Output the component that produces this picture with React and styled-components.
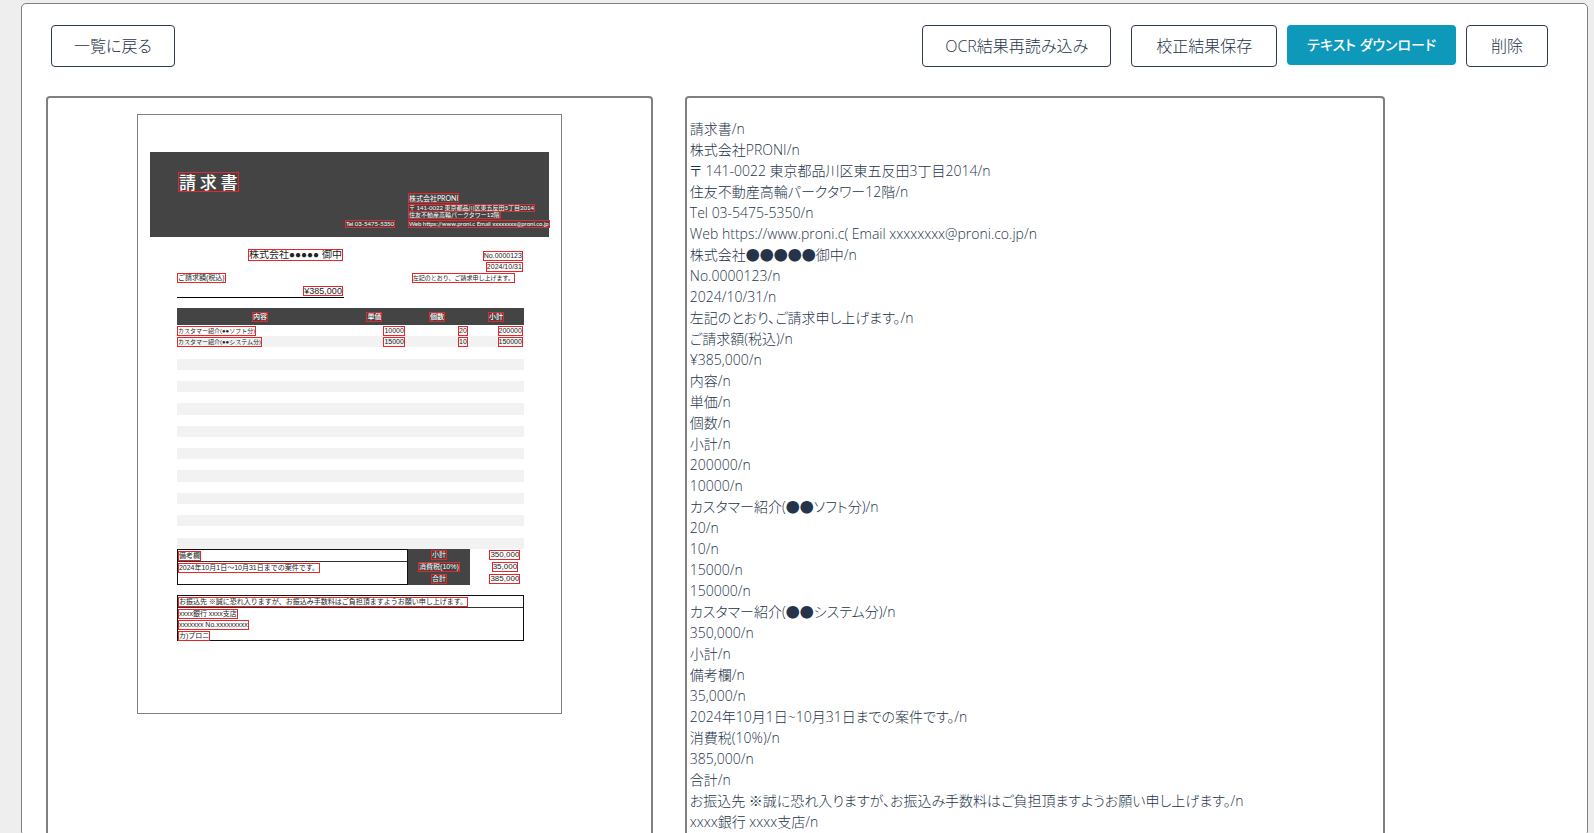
import React from "react";
import styled, { createGlobalStyle } from "styled-components";

const GlobalStyle = createGlobalStyle`
  *, *::before, *::after { box-sizing: border-box; }
  body {
    margin: 0;
    background: #eeeeee;
    color: #26344a;
    font: 14px/21px "Open Sans", "Noto Sans CJK JP", sans-serif;
    font-feature-settings: "palt";
  }
`;

const Page = styled.div`
  height: 100vh;
  overflow: hidden;
  padding: 3px 6px 0 21px;
`;

const Card = styled.main`
  display: flex;
  flex-direction: column;
  min-height: 100vh;
  background: #ffffff;
  border: 1px solid #808080;
  border-radius: 5px;
`;

const Toolbar = styled.header`
  display: flex;
  align-items: flex-start;
  justify-content: space-between;
  padding: 21px 39px 29px 29px;
`;

const Actions = styled.div`
  display: flex;
  align-items: flex-start;
  gap: 10px;
`;

const Button = styled.button`
  height: 42px;
  padding: 0 ${(p) => (p.$snug ? 22 : 24)}px;
  border: 1px solid #2c3a52;
  border-radius: 4px;
  background: #ffffff;
  color: #26344a;
  font: 16px/24px "Open Sans", "Noto Sans CJK JP", sans-serif;
  font-weight: 300;
  font-feature-settings: inherit;
  white-space: nowrap;
  cursor: pointer;
`;

const ReloadButton = styled(Button)`
  margin-right: 10px;
`;

const PrimaryButton = styled(Button)`
  height: 40px;
  padding: 0 20px;
  border: 0;
  background: #0e98ba;
  color: #ffffff;
  font-size: 14px;
  font-weight: 500;
`;

const Panels = styled.div`
  flex: 1;
  display: flex;
  gap: 32px;
  padding: 0 24px;
`;

const Panel = styled.section`
  border: 2px solid #808080;
  border-bottom: 0;
  border-radius: 4px 4px 0 0;
`;

const PreviewPanel = styled(Panel)`
  flex: 0 0 40%;
  padding-top: 16px;
`;

const TextPanel = styled(Panel)`
  flex: 0 1 700px;
  padding: 20px 3px 0;
`;

const Line = styled.p`
  margin: 0;
  font-weight: 300;
  white-space: pre-wrap;
`;

const Sheet = styled.article`
  width: 425px;
  height: 600px;
  margin: 0 auto;
  padding: 37px 12px 0;
  border: 1px solid #808080;
  background: #ffffff;
  color: #222222;
  font: 7px/8px "Liberation Sans", "Noto Sans CJK JP", sans-serif;
`;

const Mark = styled.span`
  display: inline-block;
  height: ${(p) => p.$h || 8}px;
  line-height: ${(p) => p.$h || 8}px;
  font-size: ${(p) => p.$size || 7}px;
  outline: 1px solid #e8262a;
  vertical-align: top;
  white-space: nowrap;
`;

const Band = styled.header`
  display: flex;
  flex-direction: column;
  height: 85px;
  padding: 21px 8px 0 29px;
  background: #444444;
  color: #ffffff;
`;

const Title = styled.h1`
  height: 21px;
  margin: 0;
  font-size: 17px;
  font-weight: 500;
  line-height: 18px;
  font-family: "Noto Sans CJK JP", sans-serif;
`;

const Sender = styled.div`
  display: grid;
  grid-template-columns: 63px 132px;
  grid-template-rows: 11px 7px 9px 7px;
  justify-content: end;
  align-items: start;
  font-family: Lato, "Noto Sans CJK JP", sans-serif;

  & > * { grid-column: 2; justify-self: start; }
  & > :last-child { grid-column: 1; grid-row: 4; }
`;

const Body = styled.div`
  padding: 11px 25px 0 27px;
`;

const Summary = styled.div`
  display: flex;
  justify-content: space-between;
  align-items: flex-start;
  height: 60px;
`;

const Billing = styled.div`
  display: flex;
  flex-direction: column;
  align-items: flex-end;
  width: 167px;
  height: 50px;
  padding: 2px 2px 0 1px;
  border-bottom: 1px solid #000000;

  & > :nth-child(2) { align-self: flex-start; margin: 14px 0 5px; }
`;

const Issue = styled.div`
  display: flex;
  flex-direction: column;
  align-items: flex-end;
  gap: 3px;
  padding: 4px 2px 0 0;

  & > :last-child { margin-right: 8px; }
`;

const Items = styled.table`
  width: 100%;
  height: 241px;
  border-collapse: collapse;
  table-layout: fixed;
  line-height: 8px;

  th, td { padding: 0 2px 0 1px; vertical-align: middle; text-align: right; line-height: 8px; }
  td { height: 11px; }
  td:first-child { text-align: left; }
  th { height: 17px; text-align: center; color: #ffffff; background: #444444; font-weight: 500; }
  tbody tr:nth-child(even) { background: #f2f2f2; }
  col:nth-child(1) { width: 167px; }
  col:nth-child(2) { width: 62px; }
  col:nth-child(3) { width: 63px; }
`;

const Totals = styled.div`
  display: grid;
  grid-template-columns: 231px 62px 1fr;
  height: 36px;
`;

const Box = styled.section`
  border: 1px solid #111111;
`;

const BoxHead = styled.div`
  height: 12px;
  padding: 2px 0 0 1px;
  border-bottom: 1px solid #333333;
`;

const BoxBody = styled.div`
  display: flex;
  flex-direction: column;
  align-items: flex-start;
  gap: 3px;
  padding: 2px 0 0 1px;
`;

const SumColumn = styled.div`
  display: flex;
  flex-direction: column;
  align-items: center;
  justify-content: space-around;
  padding-left: ${(p) => (p.$dark ? 0 : 16)}px;
  background: ${(p) => (p.$dark ? "#444444" : "transparent")};
  color: ${(p) => (p.$dark ? "#ffffff" : "inherit")};
`;

const BankBox = styled(Box)`
  height: 46px;
  margin-top: 10px;
`;

const ITEMS = [
  ["カスタマー紹介(●●ソフト分)", "10000", "20", "200000"],
  ["カスタマー紹介(●●システム分)", "15000", "10", "150000"],
];
const BLANK_ROWS = 18;

const LINES = [
  "請求書",
  "株式会社PRONI",
  "〒 141-0022 東京都品川区東五反田3丁目2014",
  "住友不動産高輪パークタワー12階",
  "Tel 03-5475-5350",
  "Web https://www.proni.c( Email xxxxxxxx@proni.co.jp",
  "株式会社●●●●●御中",
  "No.0000123",
  "2024/10/31",
  "左記のとおり、ご請求申し上げます。",
  "ご請求額(税込)",
  "¥385,000",
  "内容",
  "単価",
  "個数",
  "小計",
  "200000",
  "10000",
  "カスタマー紹介(●●ソフト分)",
  "20",
  "10",
  "15000",
  "150000",
  "カスタマー紹介(●●システム分)",
  "350,000",
  "小計",
  "備考欄",
  "35,000",
  "2024年10月1日~10月31日までの案件です。",
  "消費税(10%)",
  "385,000",
  "合計",
  "お振込先 ※誠に恐れ入りますが、お振込み手数料はご負担頂ますようお願い申し上げます。",
  "xxxx銀行 xxxx支店",
];

function Invoice() {
  return (
    <Sheet>
      <Band>
        <Title><Mark $size={17} $h={18}>請 求 書</Mark></Title>
        <Sender>
          <Mark>株式会社PRONI</Mark>
          <Mark $size={6} $h={6}>〒 141-0022 東京都品川区東五反田3丁目2014</Mark>
          <Mark $size={6} $h={6}>住友不動産高輪パークタワー12階</Mark>
          <Mark $size={6} $h={6}>Web https://www.proni.c Email xxxxxxxx@proni.co.jp</Mark>
          <Mark $size={6} $h={6}>Tel 03-5475-5350</Mark>
        </Sender>
      </Band>
      <Body>
        <Summary>
          <Billing>
            <Mark $size={10} $h={10}>株式会社●●●●● 御中</Mark>
            <Mark>ご請求額(税込)</Mark>
            <Mark $size={9}>¥385,000</Mark>
          </Billing>
          <Issue>
            <Mark>No.0000123</Mark>
            <Mark>2024/10/31</Mark>
            <Mark $size={6}>左記のとおり、ご請求申し上げます。</Mark>
          </Issue>
        </Summary>
        <Items>
          <colgroup><col /><col /><col /><col /></colgroup>
          <thead>
            <tr>
              {["内容", "単価", "個数", "小計"].map((h) => (
                <th key={h} scope="col"><Mark>{h}</Mark></th>
              ))}
            </tr>
          </thead>
          <tbody>
            {ITEMS.map((row) => (
              <tr key={row[0]}>
                {row.map((cell, i) => (
                  <td key={cell}><Mark $size={i === 0 ? 6 : 7}>{cell}</Mark></td>
                ))}
              </tr>
            ))}
            {Array.from({ length: BLANK_ROWS }, (_, i) => (
              <tr key={i}><td colSpan={4} /></tr>
            ))}
          </tbody>
        </Items>
        <Totals>
          <Box>
            <BoxHead><Mark>備考欄</Mark></BoxHead>
            <BoxBody><Mark>2024年10月1日～10月31日までの案件です。</Mark></BoxBody>
          </Box>
          <SumColumn $dark>
            <Mark>小計</Mark>
            <Mark>消費税(10%)</Mark>
            <Mark>合計</Mark>
          </SumColumn>
          <SumColumn>
            <Mark $size={8}>350,000</Mark>
            <Mark $size={8}>35,000</Mark>
            <Mark $size={8}>385,000</Mark>
          </SumColumn>
        </Totals>
        <BankBox>
          <BoxHead>
            <Mark>お振込先 ※誠に恐れ入りますが、お振込み手数料はご負担頂ますようお願い申し上げます。</Mark>
          </BoxHead>
          <BoxBody>
            <Mark>xxxx銀行 xxxx支店</Mark>
            <Mark>xxxxxxx No.xxxxxxxxx</Mark>
            <Mark>カ)プロニ</Mark>
          </BoxBody>
        </BankBox>
      </Body>
    </Sheet>
  );
}

export default function App() {
  return (
    <>
      <GlobalStyle />
      <Page>
        <Card>
          <Toolbar>
            <Button type="button" $snug>一覧に戻る</Button>
            <Actions>
              <ReloadButton type="button" $snug>OCR結果再読み込み</ReloadButton>
              <Button type="button">校正結果保存</Button>
              <PrimaryButton type="button">テキスト ダウンロード</PrimaryButton>
              <Button type="button">削除</Button>
            </Actions>
          </Toolbar>
          <Panels>
            <PreviewPanel>
              <Invoice />
            </PreviewPanel>
            <TextPanel>
              {LINES.map((text, i) => <Line key={i}>{text}/n</Line>)}
            </TextPanel>
          </Panels>
        </Card>
      </Page>
    </>
  );
}
